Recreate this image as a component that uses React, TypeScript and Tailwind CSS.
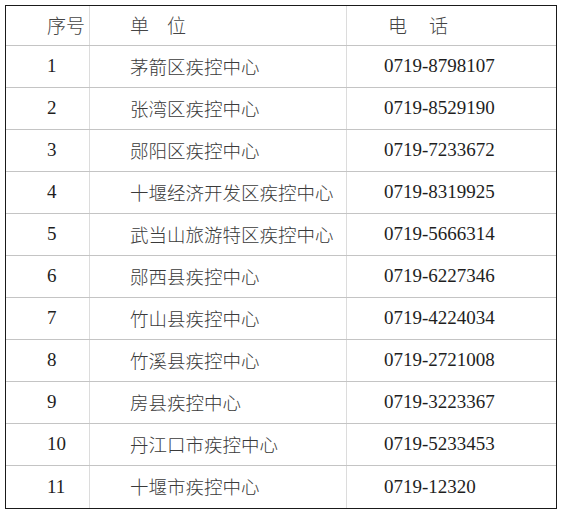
import React from "react";

const rows: [string, string, string][] = [
  ["1", "茅箭区疾控中心", "0719-8798107"],
  ["2", "张湾区疾控中心", "0719-8529190"],
  ["3", "郧阳区疾控中心", "0719-7233672"],
  ["4", "十堰经济开发区疾控中心", "0719-8319925"],
  ["5", "武当山旅游特区疾控中心", "0719-5666314"],
  ["6", "郧西县疾控中心", "0719-6227346"],
  ["7", "竹山县疾控中心", "0719-4224034"],
  ["8", "竹溪县疾控中心", "0719-2721008"],
  ["9", "房县疾控中心", "0719-3223367"],
  ["10", "丹江口市疾控中心", "0719-5233453"],
  ["11", "十堰市疾控中心", "0719-12320"],
];

function Row({ n, name, tel, last }: { n: string; name: string; tel: string; last: boolean }) {
  return (
    <div className={last ? "grid grid-cols-[84px_257px_1fr] h-[42px]" : "grid grid-cols-[84px_257px_1fr] h-[42px] border-b border-[#c4c4c4]"}>
      <div className="flex items-center pl-[41px] text-[19px] text-[#1e1e1e] border-r border-[#dcdcdc] font-['Liberation_Serif',serif]">
        {n}
      </div>
      <div className="flex items-center pl-[40px] text-[18.5px] text-[#3a3a3a] font-light border-r border-[#dcdcdc] font-['Noto_Sans_CJK_SC',sans-serif]">
        {name}
      </div>
      <div className="flex items-center pl-[37px] text-[19px] text-[#1e1e1e] font-['Liberation_Serif',serif]">
        {tel}
      </div>
    </div>
  );
}

export default function App() {
  return (
    <div className="w-[564px] h-[516px] bg-white pt-[5px] pl-[5px]">
      <div className="w-[552px] h-[504px] border border-[#1a1a1a] flex flex-col">
        <div className="grid grid-cols-[84px_257px_1fr] h-[40px] border-b border-[#c4c4c4] text-[19px] text-[#444] font-light font-['Noto_Sans_CJK_SC',sans-serif]">
          <div className="flex items-center pl-[41px] border-r border-[#dcdcdc]">序号</div>
          <div className="flex items-center pl-[40px] border-r border-[#dcdcdc]">
            <span>单</span>
            <span className="ml-[18px]">位</span>
          </div>
          <div className="flex items-center pl-[41px]">
            <span>电</span>
            <span className="ml-[22px]">话</span>
          </div>
        </div>
        {rows.map(([n, name, tel], i) => (
          <Row key={n} n={n} name={name} tel={tel} last={i === rows.length - 1} />
        ))}
      </div>
    </div>
  );
}
